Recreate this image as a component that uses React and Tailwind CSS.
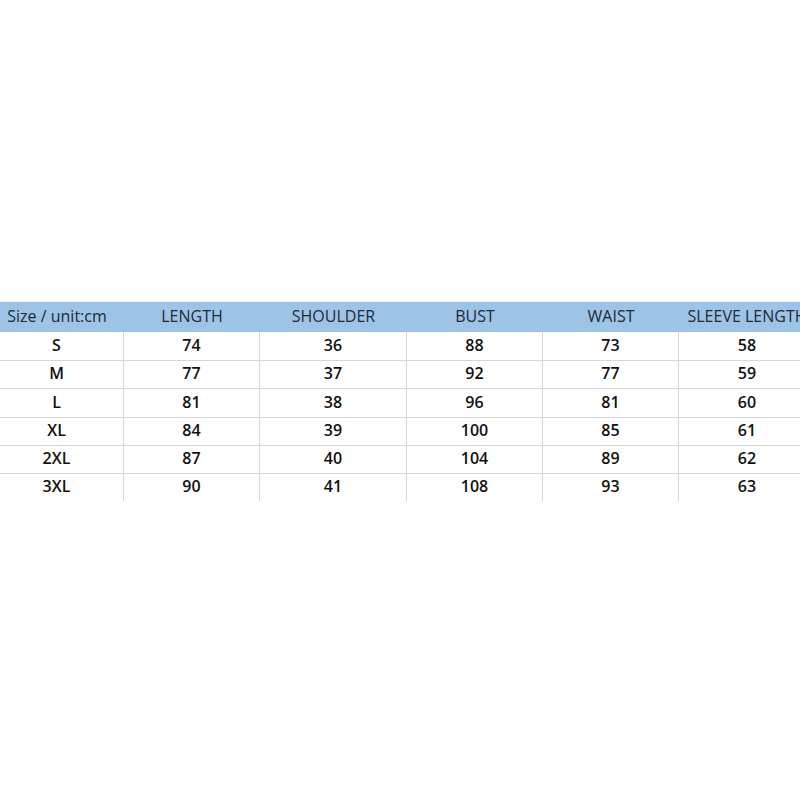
export default function App() {
  const headers = ["Size / unit:cm", "LENGTH", "SHOULDER", "BUST", "WAIST", "SLEEVE LENGTH"];
  const rows = [
    ["S", "74", "36", "88", "73", "58"],
    ["M", "77", "37", "92", "77", "59"],
    ["L", "81", "38", "96", "81", "60"],
    ["XL", "84", "39", "100", "85", "61"],
    ["2XL", "87", "40", "104", "89", "62"],
    ["3XL", "90", "41", "108", "93", "63"],
  ];
  const heights = ["h-[29px]", "h-[28px]", "h-[29px]", "h-[28px]", "h-[28px]", "h-[27px]"];
  return (
    <div className="w-[800px] h-[800px] bg-white overflow-hidden" style={{ fontFamily: '"Open Sans", "Noto Sans", sans-serif' }}>
      <div className="ml-[-10px] mt-[301px] w-[825px]">
        <div className="grid grid-cols-[134px_136px_147px_136px_136px_136px] h-[31px] bg-[#9dc3e6] border-t border-[#e6eef6] text-[#1e2a36] text-[16px]">
          {headers.map((h, i) => (
            <div key={i} className="flex items-center justify-center whitespace-nowrap pb-[3px]">{h}</div>
          ))}
        </div>
        {rows.map((r, ri) => (
          <div
            key={ri}
            className={`grid grid-cols-[134px_136px_147px_136px_136px_136px] ${heights[ri]} ${ri < rows.length - 1 ? "border-b border-[#d6d6d6]" : ""} text-[16px] font-semibold text-[#111]`}
          >
            {r.map((c, ci) => (
              <div key={ci} className={`flex items-center justify-center pb-[3px] ${ci < 5 ? "border-r border-[#d6d6d6]" : ""}`}>{c}</div>
            ))}
          </div>
        ))}
      </div>
    </div>
  );
}
